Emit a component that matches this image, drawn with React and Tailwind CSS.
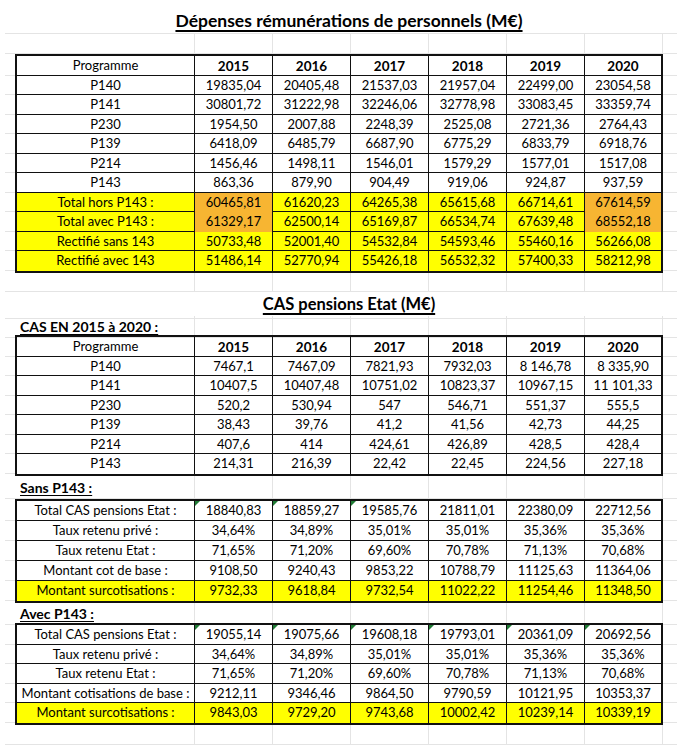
import React from "react";

const colStart = [
  "col-start-1",
  "col-start-2",
  "col-start-3",
  "col-start-4",
  "col-start-5",
  "col-start-6",
  "col-start-7",
  "col-start-8",
  "col-start-9",
];

const years = ["2015", "2016", "2017", "2018", "2019", "2020"];

const depenses = [
  { label: "P140", vals: ["19835,04", "20405,48", "21537,03", "21957,04", "22499,00", "23054,58"] },
  { label: "P141", vals: ["30801,72", "31222,98", "32246,06", "32778,98", "33083,45", "33359,74"] },
  { label: "P230", vals: ["1954,50", "2007,88", "2248,39", "2525,08", "2721,36", "2764,43"] },
  { label: "P139", vals: ["6418,09", "6485,79", "6687,90", "6775,29", "6833,79", "6918,76"] },
  { label: "P214", vals: ["1456,46", "1498,11", "1546,01", "1579,29", "1577,01", "1517,08"] },
  { label: "P143", vals: ["863,36", "879,90", "904,49", "919,06", "924,87", "937,59"] },
  { label: "Total hors P143 :", vals: ["60465,81", "61620,23", "64265,38", "65615,68", "66714,61", "67614,59"], yellow: true, orange: [0, 5] },
  { label: "Total avec P143 :", vals: ["61329,17", "62500,14", "65169,87", "66534,74", "67639,48", "68552,18"], yellow: true, orange: [0, 5] },
  { label: "Rectifié sans 143", vals: ["50733,48", "52001,40", "54532,84", "54593,46", "55460,16", "56266,08"], yellow: true },
  { label: "Rectifié avec 143", vals: ["51486,14", "52770,94", "55426,18", "56532,32", "57400,33", "58212,98"], yellow: true },
];

const cas = [
  { label: "P140", vals: ["7467,1", "7467,09", "7821,93", "7932,03", "8 146,78", "8 335,90"] },
  { label: "P141", vals: ["10407,5", "10407,48", "10751,02", "10823,37", "10967,15", "11 101,33"] },
  { label: "P230", vals: ["520,2", "530,94", "547", "546,71", "551,37", "555,5"] },
  { label: "P139", vals: ["38,43", "39,76", "41,2", "41,56", "42,73", "44,25"] },
  { label: "P214", vals: ["407,6", "414", "424,61", "426,89", "428,5", "428,4"] },
  { label: "P143", vals: ["214,31", "216,39", "22,42", "22,45", "224,56", "227,18"] },
];

const sans = [
  { label: "Total CAS pensions Etat :", vals: ["18840,83", "18859,27", "19585,76", "21811,01", "22380,09", "22712,56"], tri: [0, 1, 2] },
  { label: "Taux retenu privé :", vals: ["34,64%", "34,89%", "35,01%", "35,01%", "35,36%", "35,36%"] },
  { label: "Taux retenu Etat :", vals: ["71,65%", "71,20%", "69,60%", "70,78%", "71,13%", "70,68%"] },
  { label: "Montant cot de base :", vals: ["9108,50", "9240,43", "9853,22", "10788,79", "11125,63", "11364,06"] },
  { label: "Montant surcotisations :", vals: ["9732,33", "9618,84", "9732,54", "11022,22", "11254,46", "11348,50"], yellow: true },
];

const avec = [
  { label: "Total CAS pensions Etat :", vals: ["19055,14", "19075,66", "19608,18", "19793,01", "20361,09", "20692,56"], tri: [0, 1, 2, 3, 4, 5] },
  { label: "Taux retenu privé :", vals: ["34,64%", "34,89%", "35,01%", "35,01%", "35,36%", "35,36%"] },
  { label: "Taux retenu Etat :", vals: ["71,65%", "71,20%", "69,60%", "70,78%", "71,13%", "70,68%"] },
  { label: "Montant cotisations de base :", vals: ["9212,11", "9346,46", "9864,50", "9790,59", "10121,95", "10353,37"] },
  { label: "Montant surcotisations :", vals: ["9843,03", "9729,20", "9743,68", "10002,42", "10239,14", "10339,19"], yellow: true },
];

// empty spreadsheet row, faint excel gridlines
const SheetRow = ({ h, lines = true, children }) => (
  <div className={`grid grid-cols-[10px_180px_repeat(6,78px)_14px] ${h}`}>
    {colStart.map((c, i) => (
      <div
        key={c}
        className={`${c} row-start-1 border-b border-[#e4e4e4] ${lines && i > 0 && i < 8 ? "border-r" : ""}`}
      />
    ))}
    {children}
  </div>
);

const Stubs = ({ count, rowH, w }) => (
  <div className={`flex flex-col pt-[2px] ${w}`}>
    {Array.from({ length: count }).map((_, i) => (
      <div key={i} className={`${rowH} border-b border-[#e4e4e4]`} />
    ))}
  </div>
);

const Table = ({ rows, rowH, header }) => {
  const all = header ? [{ label: "Programme", vals: years, head: true }, ...rows] : rows;
  return (
    <div className="flex">
      <Stubs count={all.length} rowH={rowH} w="w-[10px]" />
      <div className="w-[648px] border-2 border-[#111]">
        {all.map((r, ri) => (
          <div
            key={ri}
            className={`grid grid-cols-[178px_repeat(5,78px)_76px] ${rowH} ${ri < all.length - 1 ? "border-b border-[#111]" : ""} ${r.yellow ? "bg-[#ffff00]" : ""}`}
          >
            <div className="flex items-center justify-center whitespace-nowrap border-r border-[#111]">
              {r.label}
            </div>
            {r.vals.map((v, ci) => (
              <div
                key={ci}
                className={`relative flex items-center justify-center whitespace-nowrap ${ci < 5 ? "border-r border-[#111]" : ""} ${r.orange && r.orange.includes(ci) ? "bg-[#f7b532]" : ""} ${r.head ? "font-bold text-[13.5px]" : ""}`}
              >
                {r.tri && r.tri.includes(ci) && (
                  <span className="absolute left-0 top-0 h-0 w-0 border-t-[5px] border-r-[5px] border-t-[#1f7a34] border-r-transparent" />
                )}
                {v}
              </div>
            ))}
          </div>
        ))}
      </div>
      <Stubs count={all.length} rowH={rowH} w="w-[14px]" />
    </div>
  );
};

const SubLabel = ({ children }) => (
  <div className="col-start-2 col-end-5 row-start-1 flex items-end pb-[1px] pl-[5px] text-[14px] font-bold underline decoration-1 underline-offset-2">
    {children}
  </div>
);

export default function App() {
  return (
    <div className="w-[684px] h-[750px] overflow-hidden bg-white text-[13px] text-black font-[Lato,'Noto_Sans',sans-serif]">
      <div className="ml-[5px] flex w-[672px] flex-col">
        <SheetRow h="h-[34px]" lines={false}>
          <div className="col-start-1 col-end-10 row-start-1 flex items-end justify-center pb-0 pl-[16px] text-[17.5px] font-bold underline decoration-[1.5px] underline-offset-[3px]">
            Dépenses rémunérations de personnels (M€)
          </div>
        </SheetRow>
        <SheetRow h="h-[20px]" />
        <Table rows={depenses} rowH="h-[19.5px]" header />
        <SheetRow h="h-[19.5px]" />
        <SheetRow h="h-[24px]" lines={false}>
          <div className="col-start-1 col-end-10 row-start-1 flex items-end justify-center pb-[2px] pl-[16px] text-[16.5px] font-bold underline decoration-[1.5px] underline-offset-[3px]">
            CAS pensions Etat  (M€)
          </div>
        </SheetRow>
        <SheetRow h="h-[19px]">
          <SubLabel>CAS EN 2015 à 2020 :</SubLabel>
        </SheetRow>
        <Table rows={cas} rowH="h-[19.5px]" header />
        <SheetRow h="h-[23.5px]">
          <SubLabel>Sans P143 :</SubLabel>
        </SheetRow>
        <Table rows={sans} rowH="h-[20px]" />
        <SheetRow h="h-[20px]">
          <SubLabel>Avec P143 :</SubLabel>
        </SheetRow>
        <Table rows={avec} rowH="h-[19.5px]" />
        <SheetRow h="h-[20px]" />
      </div>
    </div>
  );
}
